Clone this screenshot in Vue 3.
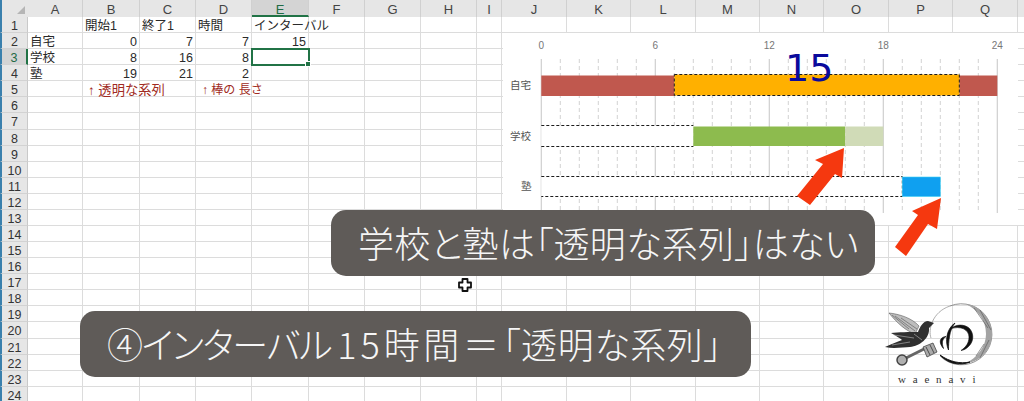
<script setup>
const cols = [
  ['A', 55], ['B', 57], ['C', 56], ['D', 56], ['E', 57], ['F', 56], ['G', 56], ['H', 56], ['I', 25],
  ['J', 65], ['K', 64], ['L', 65], ['M', 64], ['N', 64], ['O', 65], ['P', 64], ['Q', 65], ['', 6],
]
const gridCols = `28px ${cols.map((c) => c[1] + 'px').join(' ')}`
const data = {
  '1,1': { t: '開始1' }, '1,2': { t: '終了1' }, '1,3': { t: '時間' }, '1,4': { t: 'インターバル' },
  '2,0': { t: '自宅' }, '2,1': { t: '0', r: 1 }, '2,2': { t: '7', r: 1 }, '2,3': { t: '7', r: 1 }, '2,4': { t: '15', r: 1 },
  '3,0': { t: '学校' }, '3,1': { t: '8', r: 1 }, '3,2': { t: '16', r: 1 }, '3,3': { t: '8', r: 1 },
  '4,0': { t: '塾' }, '4,1': { t: '19', r: 1 }, '4,2': { t: '21', r: 1 }, '4,3': { t: '2', r: 1 },
  '5,1': { t: '↑ 透明な系列', n: 1 }, '5,3': { t: '↑ 棒の 長さ', n: 1, s: 1 },
}
const rows = Array.from({ length: 24 }, (_, i) => i + 1)
const cell = (r, c) => data[`${r},${c}`] || { t: '' }
const scale = 19
const X = (h) => 38.3 + h * scale
const hours = Array.from({ length: 25 }, (_, i) => i)
</script>

<template>
  <div class="sheet">
    <div class="grid" :style="{ gridTemplateColumns: gridCols }">
      <div class="corner"><span class="tri"></span></div>
      <div v-for="(c, i) in cols" :key="'h' + i" class="colhead" :class="{ active: c[0] === 'E', blank: !c[0] }">{{ c[0] }}</div>
      <template v-for="r in rows" :key="r">
        <div class="rowhead" :class="{ active: r === 3 }">{{ r }}</div>
        <div
          v-for="(c, i) in cols"
          :key="i"
          class="cell"
          :class="{ right: cell(r, i).r, note: cell(r, i).n, tight: cell(r, i).s, selected: r === 3 && i === 4, edge: !c[0] }"
        >{{ cell(r, i).t }}</div>
      </template>
    </div>

    <div class="chart">
      <svg width="515" height="192" viewBox="0 0 515 192" class="plot">
        <g v-for="h in hours" :key="h">
          <line
            :x1="X(h)" :x2="X(h)" y1="26" y2="180"
            :stroke="h % 6 === 0 ? '#cfcfcf' : '#cdcdcd'"
            :stroke-width="h % 6 === 0 ? 1.2 : 0.9"
            :stroke-dasharray="h % 6 === 0 ? 'none' : '4 3'"
          />
        </g>
        <text v-for="h in [0, 6, 12, 18, 24]" :key="'t' + h" :x="X(h)" y="16" class="axis">{{ h }}</text>
        <text x="7" y="56" class="cat">自宅</text>
        <text x="7" y="107" class="cat">学校</text>
        <text x="18" y="157" class="cat">塾</text>

        <rect :x="X(0)" y="42.5" :width="7 * scale" height="20.5" fill="#c0584e" />
        <rect :x="X(22)" y="42.5" :width="2 * scale" height="20.5" fill="#c0584e" />
        <rect :x="X(7)" y="41.5" :width="15 * scale" height="21" fill="#ffb000" stroke="#1c1c1c" stroke-dasharray="3 2" />

        <rect :x="X(0)" y="92.5" :width="8 * scale" height="21" fill="#fff" />
        <path :d="`M${X(0)} 92.500H${X(8)}M${X(0)} 113.500H${X(8)}`" stroke="#1c1c1c" stroke-dasharray="3 2" fill="none" />
        <rect :x="X(8)" y="93.5" :width="8 * scale" height="19.5" fill="#8dbb4e" />
        <rect :x="X(16)" y="93.5" :width="2 * scale" height="19.5" fill="#d0dbb7" />

        <rect :x="X(0)" y="143.5" :width="19 * scale" height="20" fill="#fff" />
        <path :d="`M${X(0)} 143.500H${X(19)}V163.500H${X(0)}`" stroke="#1c1c1c" stroke-dasharray="3 2" fill="none" />
        <rect :x="X(19)" y="144" :width="2 * scale" height="19.5" fill="#0fa0f0" stroke="#3fd0f5" stroke-width="0.6" />
      </svg>
    </div>

    <div class="big15">15</div>

    <svg class="arrows" width="1024" height="401" viewBox="0 0 1024 401">
      <polygon points="844,148 842,178 835,174 810,205 797,196 823,164 815,160" fill="#f5380f" />
      <polygon points="941,198 937,229 928,224 906,256 895,247 918,215 912,211" fill="#f5380f" />
    </svg>

    <div class="callout top">学校と塾は「透明な系列」はない</div>
    <div class="callout bottom"><span class="kata">④インターバル</span><span class="num">15</span><span class="wide">時間＝</span>「透明な系列」</div>

    <svg class="cursor" width="16" height="16" viewBox="0 0 16 16">
      <path d="M5.5 2h5v3.5H14v5h-3.500V14h-5v-3.500H2v-5h3.500z" fill="#fff" stroke="#111" stroke-width="1.800" stroke-linejoin="round" />
    </svg>

    <div class="logo">
      <svg width="114" height="72" viewBox="0 0 114 72">
        <path d="M66 6A30.500 30.500 0 1 1 56 56" fill="none" stroke="#777" stroke-width="0.800" />
        <path d="M66 6C48 12 44 30 47 38" fill="none" stroke="#999" stroke-width="0.800" />
        <path d="M82 4C98 6 108 20 108 34C108 50 96 62 80 64C94 58 102 46 102 34C102 20 94 10 82 4Z" fill="#a3a3a3" />
        <path d="M90 8L104 28M96 10L107 30M100 44L92 56M105 40L96 58" stroke="#555" stroke-width="0.600" />
        <path d="M56 55C64 64 76 66 86 62C76 64 66 62 56 55Z" fill="#111" stroke="#111" stroke-width="0.900" />
        <path d="M62 36.500C56 37 54 42 59.500 48.500C57.500 43 58 39 62 36.500Z" fill="#111" stroke="#111" stroke-width="0.700" />
        <path d="M71 23C62 29 61 42 64.500 50C64.500 42 65 30 71 23Z" fill="#111" stroke="#111" stroke-width="0.800" />
        <path d="M66 29C72 24 80 24 85 28C90 33 90 41 85 46C82 49 80 50 77 50.500C82 47 85 43 85 37C85 30 77 25 66 29Z" fill="#111" stroke="#111" stroke-width="0.600" />
        <path d="M5 13C15 14 28 18 35 26L31 34C22 31 13 23 5 13Z" fill="#bdbdbd" stroke="#444" stroke-width="0.500" />
        <path d="M11 16L31 31M17 18L33 29M8 15L25 29" stroke="#444" stroke-width="0.500" />
        <path d="M50 23L44 21C39 21 36 27 34 32C26 32 14 32 7 33C12 36 16 38 18 40C12 42 6 45 1 47C10 49 20 47 26 47C36 46 46 38 45 28Z" fill="#303030" />
        <path d="M10 35L30 38M8 45L26 42M30 34L38 40" stroke="#bbb" stroke-width="0.600" />
        <path d="M42 48L22 58" stroke="#666" stroke-width="3" />
        <path d="M39 47L49 43L53 52L43 57Z" fill="#aaa" stroke="#444" stroke-width="0.800" />
        <path d="M42 47L46 55M46 45L50 53" stroke="#333" stroke-width="0.800" />
        <circle cx="18" cy="60" r="5" fill="#b0b0b0" stroke="#444" stroke-width="1.500" />
      </svg>
      <div class="logotext">waenavi</div>
    </div>
  </div>
</template>

<style>
html, body { margin: 0; background: #fff; overflow: hidden; }
</style>

<style scoped>
.sheet {
  position: relative;
  width: 1024px;
  height: 401px;
  overflow: hidden;
  background: #fff;
  font-family: "Liberation Sans", "Noto Sans CJK JP", sans-serif;
  color: #222;
}
.grid {
  display: grid;
  grid-auto-rows: 16.09px;
  grid-template-rows: 17px;
  width: 1024px;
}
.corner {
  background: #e6e6e6;
  position: relative;
  border-left: 2px solid #3a80ad;
  box-sizing: border-box;
}
.tri {
  position: absolute;
  right: 3px;
  bottom: 3px;
  border-left: 8px solid transparent;
  border-bottom: 8px solid #b5b5b5;
}
.colhead {
  background: #e6e6e6;
  border-right: 1px solid #d0d0d0;
  box-sizing: border-box;
  text-align: center;
  font-size: 13px;
  line-height: 20px;
  color: #444;
}
.colhead.active {
  background: #d4d4d4;
  color: #1f6b45;
  border-bottom: 2px solid #217346;
}
.colhead.blank { background: #e6e6e6; border-right: none; }
.rowhead {
  background: #e6e6e6;
  border-left: 2px solid #3a80ad;
  border-right: 1px solid #c9c9c9;
  border-bottom: 1px solid #d2d2d2;
  box-sizing: border-box;
  text-align: center;
  font-size: 12.500px;
  line-height: 10px;
  padding-top: 4px;
  color: #333;
}
.rowhead.active { background: #d4d4d4; color: #1f6b45; border-right: 2px solid #217346; }
.cell {
  border-right: 1px solid #dcdcdc;
  border-bottom: 1px solid #dcdcdc;
  box-sizing: border-box;
  padding: 0 2px;
  font-size: 12.500px;
  line-height: 19px;
  white-space: nowrap;
  color: #2a2a2a;
}
.cell.right { text-align: right; }
.cell.note { color: #a02a22; font-size: 13.300px; padding-left: 5px; }
.cell.note.tight { font-size: 12px; padding-left: 6px; }
.cell.edge { border-right: none; }
.cell.selected {
  position: relative;
  outline: 2px solid #217346;
  outline-offset: -1px;
}
.cell.selected::after {
  content: "";
  position: absolute;
  right: -3px;
  bottom: -3px;
  width: 4px;
  height: 4px;
  background: #217346;
  border: 1px solid #fff;
}
.chart {
  position: absolute;
  left: 503px;
  top: 33px;
  width: 515px;
  height: 192px;
  background: #fff;
}
.plot { display: block; }
.axis {
  font-size: 10px;
  fill: #777;
  text-anchor: middle;
  font-family: "Liberation Sans", sans-serif;
}
.cat {
  font-size: 10.500px;
  fill: #555;
  text-anchor: start;
  font-family: "Noto Sans CJK JP", sans-serif;
}
.big15 {
  position: absolute;
  left: 785px;
  top: 46px;
  font-family: "DejaVu Sans", sans-serif;
  font-size: 38px;
  line-height: 44px;
  color: #0a0a9c;
}
.arrows { position: absolute; left: 0; top: 0; pointer-events: none; }
.callout {
  position: absolute;
  box-sizing: border-box;
  height: 66px;
  background: #5f5b58;
  border-radius: 15px;
  color: #f6f6f6;
  font-family: "Noto Sans CJK JP", sans-serif;
  font-size: 36px;
  font-weight: 300;
  line-height: 64px;
  letter-spacing: 0.600px;
  white-space: nowrap;
  font-feature-settings: "palt";
}
.callout.top { left: 331px; top: 210px; width: 544px; padding-left: 27px; letter-spacing: 0.300px; }
.callout.bottom { left: 80px; top: 311px; width: 671px; padding-left: 27px; }
.kata { letter-spacing: -1.400px; }
.num { letter-spacing: 4px; padding-left: 6px; }
.wide { letter-spacing: 3.600px; }
.cursor { position: absolute; left: 457px; top: 277px; }
.logo {
  position: absolute;
  left: 884px;
  top: 300px;
  width: 114px;
}
.logo svg { display: block; }
.logotext {
  margin-left: 14px;
  font-family: "Liberation Serif", serif;
  font-size: 11px;
  letter-spacing: 6.800px;
  line-height: 14px;
  color: #333;
}
</style>
